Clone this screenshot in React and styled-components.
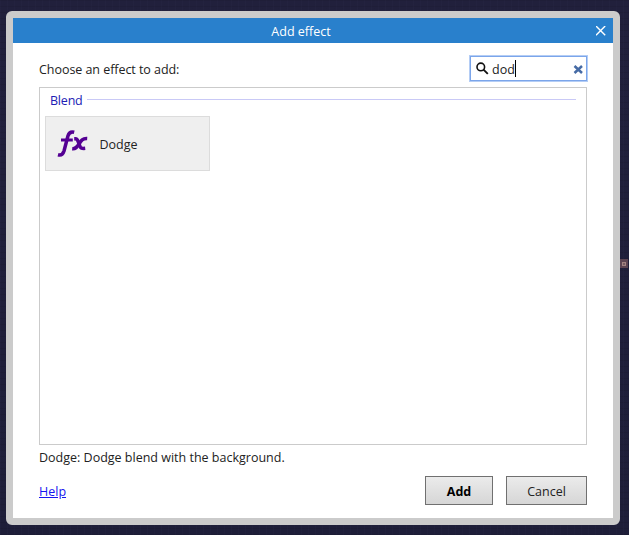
import React from "react";
import styled, { createGlobalStyle } from "styled-components";

const GlobalStyle = createGlobalStyle`
  *, *::before, *::after { box-sizing: border-box; }
  body { margin: 0; overflow: hidden; }
`;

const Backdrop = styled.main`
  position: relative;
  width: 629px;
  height: 535px;
  padding: 11px 9px 10px 6px;
  background:
    repeating-linear-gradient(0deg, rgba(0, 0, 0, 0.07) 0 1px, transparent 1px 6px),
    repeating-linear-gradient(90deg, rgba(70, 70, 110, 0.06) 0 1px, transparent 1px 7px),
    linear-gradient(#21203c, #1e1e39);
  color: #222;
  font-family: "Open Sans", "Noto Sans", sans-serif;
  font-size: 12.5px;
  line-height: 18px;
`;

const Dialog = styled.section`
  display: flex;
  flex-direction: column;
  width: 614px;
  height: 514px;
  border: 7px solid #cbcbcb;
  border-radius: 6px;
  background: #fff;
`;

const TitleBar = styled.header`
  display: grid;
  grid-template-columns: 25px 1fr 25px;
  align-items: center;
  flex: 0 0 25px;
  background: #2980cc;
  color: #fff;
`;

const Title = styled.h1`
  grid-column: 2;
  margin: 0;
  padding-top: 2px;
  padding-right: 24px;
  text-align: center;
  font-size: 12.5px;
  font-weight: 400;
  line-height: 18px;
`;

const PlainButton = styled.button`
  display: grid;
  place-items: center;
  padding: 0;
  border: 0;
  background: none;
  height: ${(p) => p.$size}px;
  width: ${(p) => p.$size}px;
`;

const Content = styled.div`
  display: flex;
  flex-direction: column;
  flex: 1;
  padding: 13px 26px;
`;

const SearchRow = styled.div`
  display: flex;
  justify-content: space-between;
  height: 31px;
`;

const Label = styled.span`
  padding-top: 5px;
  white-space: nowrap;
  letter-spacing: -0.05px;
`;

const SearchBox = styled.div`
  display: flex;
  align-items: center;
  width: 117px;
  height: 25px;
  padding: 0 2px 0 5px;
  border: 1px solid #7ba5ea;
  box-shadow: 0 0 0 1px #b4cdf5;
`;

const Query = styled.span`
  flex: 1;
  display: flex;
  align-items: center;
  margin-left: 3px;
  padding-top: 2px;
`;

const Caret = styled.i`
  width: 1px;
  height: 17px;
  margin-bottom: 2px;
  background: #000;
`;

const EffectList = styled.div`
  flex: 0 0 358px;
  border: 1px solid #cbcbcb;
  padding: 4px 10px 0 5px;
`;

const GroupHeading = styled.h2`
  display: flex;
  align-items: center;
  gap: 4px;
  height: 18px;
  margin: 0 0 6px;
  padding-left: 5px;
  color: #2020b4;
  font-size: 12.5px;
  font-weight: 400;
  letter-spacing: -0.2px;

  &::after {
    content: "";
    flex: 1;
    height: 1px;
    margin-bottom: 3px;
    background: #c9c9f6;
  }
`;

const EffectCard = styled.div`
  display: flex;
  align-items: center;
  gap: 10.5px;
  width: 165px;
  height: 55px;
  padding-left: 11px;
  border: 1px solid #dcdcdc;
  background: #efefef;
`;

const EffectName = styled.span`
  padding-top: 2px;
`;

const Description = styled.p`
  margin: 4px 0 0;
  height: 27px;
  white-space: nowrap;
`;

const Footer = styled.footer`
  display: flex;
  align-items: center;
  gap: 13px;
  height: 29px;
`;

const HelpLink = styled.a`
  margin-right: auto;
  padding-top: 2px;
  color: #1515ef;
  text-decoration: underline;
`;

const PushButton = styled.button`
  width: ${(p) => p.$width}px;
  height: 29px;
  padding: 2px 0 0;
  border: 1px solid #707070;
  background: linear-gradient(#ebebeb, #d6d6d6);
  color: ${(p) => (p.$primary ? "#000" : "#222")};
  font: ${(p) => (p.$primary ? 700 : 400)} 12.5px/18px "Open Sans", "Noto Sans", sans-serif;
`;

const Marker = styled.div`
  position: absolute;
  left: 620px;
  top: 259px;
  display: grid;
  place-items: center;
  width: 8px;
  height: 9px;
  background: #5b4351;

  &::after {
    content: "";
    width: 4px;
    height: 4px;
    border: 1px solid #a28281;
    background: #765c62;
  }
`;

const SearchIcon = () => (
  <svg width="13" height="13" viewBox="0 0 13 13" fill="none" stroke="#111">
    <circle cx="4.8" cy="4.9" r="3.8" strokeWidth="1.6" />
    <path d="M7.5 7.6 L11.8 11.9" strokeWidth="1.9" />
  </svg>
);

const ClearIcon = () => (
  <svg width="10" height="10" viewBox="0 0 10 10" fill="none" stroke="#466ba5" strokeWidth="2.5">
    <path d="M1.5 2 L9 9 M9 2 L1.5 9" />
  </svg>
);

const CloseIcon = () => (
  <svg width="10" height="10" viewBox="0 0 10 10" fill="none" stroke="#fff" strokeWidth="1.4">
    <path d="M0 0 L9.2 9.2 M9.2 0 L0 9.2" />
  </svg>
);

const EffectIcon = () => (
  <svg width="32" height="28" viewBox="0 0 32 28" fill="none" stroke="#540093" strokeLinejoin="round">
    <path d="M1 24.8 C4.2 25.7 5.9 24.5 7 21 L11 5.8 C12 2.5 14 1.4 17.2 2.2" strokeWidth="3.5" />
    <path d="M4 10 H15.8" strokeWidth="3" />
    <path d="M17.2 8.8 H18.4 C20 8.8 20.6 9.9 21.3 11.9 L23 16.3 C23.8 18.4 24.7 18.7 28.2 18.3" strokeWidth="3.5" />
    <path d="M15.2 18.8 C18.5 19.1 19.7 17.5 21.8 14.3 C24.1 10.5 25.6 8.2 30.2 8.5" strokeWidth="3.5" />
  </svg>
);

export default function App() {
  return (
    <>
      <GlobalStyle />
      <Backdrop>
        <Dialog role="dialog" aria-label="Add effect">
          <TitleBar>
            <Title>Add effect</Title>
            <PlainButton $size={25} aria-label="Close"><CloseIcon /></PlainButton>
          </TitleBar>
          <Content>
            <SearchRow>
              <Label>Choose an effect to add:</Label>
              <SearchBox>
                <SearchIcon />
                <Query>dod<Caret /></Query>
                <PlainButton $size={12} aria-label="Clear search"><ClearIcon /></PlainButton>
              </SearchBox>
            </SearchRow>
            <EffectList>
              <GroupHeading>Blend</GroupHeading>
              <EffectCard>
                <EffectIcon />
                <EffectName>Dodge</EffectName>
              </EffectCard>
            </EffectList>
            <Description>Dodge: Dodge blend with the background.</Description>
            <Footer>
              <HelpLink href="#help">Help</HelpLink>
              <PushButton $width={68} $primary>Add</PushButton>
              <PushButton $width={81}>Cancel</PushButton>
            </Footer>
          </Content>
        </Dialog>
        <Marker />
      </Backdrop>
    </>
  );
}
